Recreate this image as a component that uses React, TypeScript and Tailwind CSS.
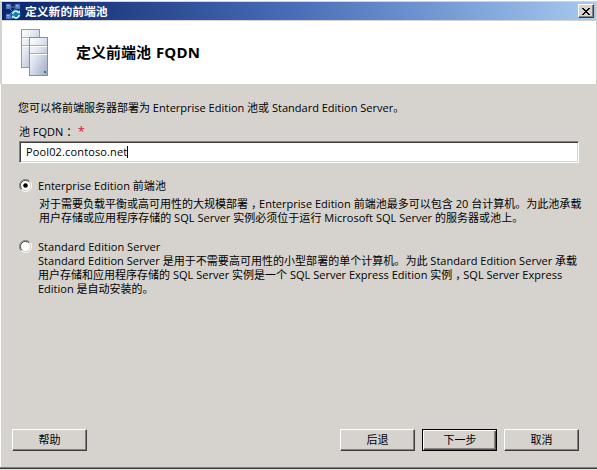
import React from "react";

const Line = ({ className = "", children }: { className?: string; children: React.ReactNode }) => (
  <div className={"h-[14px] whitespace-nowrap leading-[14px] " + className}>{children}</div>
);

const Comma = () => <span className="pr-[2.5px] pl-[3px] [font-feature-settings:'halt']">，</span>;

const ServerIcon = () => (
  <svg width="30" height="50" viewBox="0 0 30 50" className="shrink-0">
    <defs>
      <linearGradient id="face" x1="0" y1="0" x2="1" y2="1">
        <stop offset="0" stopColor="#ffffff" />
        <stop offset="0.4" stopColor="#e2e7f1" />
        <stop offset="1" stopColor="#9eaac4" />
      </linearGradient>
    </defs>
    <rect x="1.5" y="1.5" width="18" height="38" fill="url(#face)" stroke="#8f99ac" />
    <path d="M2 9.5H19M2 17.5H19" stroke="#aab2c2" />
    <path d="M2 10.5H19M2 18.5H19" stroke="#fff" />
    <rect x="9.5" y="9.5" width="18" height="38" fill="url(#face)" stroke="#858fa3" />
    <path d="M10 17.5H27M10 25.5H27" stroke="#a3acbf" />
    <path d="M10 18.5H27M10 26.5H27" stroke="#fff" />
    <rect x="24" y="43" width="2" height="2" fill="#28855f" />
  </svg>
);

const AppIcon = () => (
  <svg width="17" height="17" viewBox="0 0 17 17" className="shrink-0">
    <path d="M4 4L13 13M13 4L4 13M4 4H13" stroke="#5f82c4" strokeWidth="1" />
    <g fill="#6288cc" stroke="#2b4f99" strokeWidth=".6">
      <rect x="2" y="1" width="5" height="5" />
      <rect x="11" y="1" width="5" height="5" />
      <rect x="2" y="11" width="5" height="5" />
    </g>
    <path d="M3 2h2v1H3zM12 2h2v1h-2zM3 12h2v1H3z" fill="#9cb8e6" />
    <circle cx="12" cy="11.5" r="4.6" fill="#187aa9" />
    <path d="M8.6 11a3.4 3.4 0 0 1 5.6-2M15.2 12a3.4 3.4 0 0 1-5.6 2" fill="none" stroke="#c8f8fb" strokeWidth="1.6" />
    <path d="M12.6 10.2h3.4V7zM11.2 12.8H7.8V16z" fill="#b5f0f5" />
  </svg>
);

const Radio = ({ on = false }: { on?: boolean }) => (
  <svg width="13" height="13" viewBox="0 0 13 13" className="shrink-0">
    <circle cx="6.5" cy="6.5" r="5" fill="#fff" />
    <path d="M2.2 10.8A6 6 0 0 1 10.8 2.2" fill="none" stroke="#858180" />
    <path d="M2.9 10.1A5 5 0 0 1 10.1 2.9" fill="none" stroke="#504c4c" />
    <path d="M10.8 2.2A6 6 0 0 1 2.2 10.8" fill="none" stroke="#fff" />
    <path d="M10.1 2.9A5 5 0 0 1 2.9 10.1" fill="none" stroke="#d4d0c8" />
    {on && <circle cx="6.5" cy="6.5" r="2.3" fill="#000" />}
  </svg>
);

const Button = ({ label, primary = false }: { label: string; primary?: boolean }) => (
  <button
    className={
      "flex h-[22px] w-[75px] items-center justify-center border pt-px text-[11px] " +
      (primary
        ? "border-black pl-px shadow-[inset_1px_1px_0_#fff,inset_-1px_-1px_0_#55514f,inset_-2px_-2px_0_#8a8683]"
        : "border-t-white border-l-white border-r-[#403c3c] border-b-[#403c3c] shadow-[inset_-1px_-1px_0_#858180]")
    }
  >
    {label}
  </button>
);

export default function App() {
  return (
    <div className="flex h-[470px] w-[597px] flex-col border-t border-white bg-[#d6d3ce] pt-px font-['Open_Sans','Noto_Sans_CJK_SC',sans-serif] text-[11px] text-black">
      <div className="ml-[2px] flex h-[18px] w-[594px] shrink-0 items-center bg-linear-to-r from-[#0a246a] via-[#4a6fb8] to-[#a6caf0] pr-[2px] pl-[2px]">
        <AppIcon />
        <span className="ml-[4px] text-[11.8px] leading-[18px] font-bold whitespace-nowrap text-white">定义新的前端池</span>
        <button className="ml-auto flex h-[14px] w-[16px] items-center justify-center border border-t-white border-l-white border-r-[#403c3c] border-b-[#403c3c] bg-[#d6d3ce] shadow-[inset_-1px_-1px_0_#858180]">
          <svg width="8" height="7" viewBox="0 0 8 7" shapeRendering="crispEdges">
            <path d="M0 0h2v1h1v1h2V1h1V0h2v1H7v1H6v1H5v1h1v1h1v1h1v1H6V6H5V5H3v1H2v1H0V6h1V5h1V4h1V3H2V2H1V1H0z" />
          </svg>
        </button>
      </div>
      <div className="mt-px ml-[2px] flex h-[63px] w-[594px] shrink-0 items-start bg-white pt-[7px] pl-[18px]">
        <ServerIcon />
        <h1 className="mt-[14px] ml-[26px] text-[15px] leading-[20px] font-bold whitespace-nowrap">
          定义前端池 <span className="ml-[1px] tracking-[0.2px]">FQDN</span>
        </h1>
      </div>
      <div className="flex flex-1 flex-col border-l-[1px] border-white pl-[17px]">
        <Line className="mt-[17px]">您可以将前端服务器部署为 Enterprise Edition 池或 Standard Edition Server。</Line>
        <Line className="mt-[9px] ml-px">
          池 FQDN<span className="pr-[2px] pl-[3px] [font-feature-settings:'halt']">：</span>
          <span className="ml-[4px] text-[13px] text-[#d02030]">*</span>
        </Line>
        <div className="mt-[3px] ml-px flex h-[22px] w-[560px] shrink-0 items-center border border-t-[#858180] border-l-[#858180] border-r-white border-b-white bg-white pl-[6px] shadow-[inset_1px_1px_0_#403c3c,inset_-1px_-1px_0_#d6d3ce]">
          <span className="tracking-[0.14px]">Pool02.contoso.net</span>
          <span className="h-[12px] w-px bg-black" />
        </div>
        <div className="mt-[16px] ml-px flex">
          <Radio on />
          <div className="ml-[6px]">
            <Line className="tracking-[0.03px]">Enterprise Edition 前端池</Line>
            <Line className="mt-[4px] ml-px">
              对于需要负载平衡或高可用性的大规模部署<Comma />
              <span className="tracking-[0.02px]">Enterprise Edition 前端池最多可以包含 20 台计算机。为此池承载</span>
            </Line>
            <Line className="ml-px tracking-[0.02px]">用户存储或应用程序存储的 SQL Server 实例必须位于运行 Microsoft SQL Server 的服务器或池上。</Line>
          </div>
        </div>
        <div className="mt-[15px] ml-px flex">
          <Radio />
          <div className="ml-[6px]">
            <Line className="tracking-[0.05px]">Standard Edition Server</Line>
            <Line className="tracking-[0.03px]">Standard Edition Server 是用于不需要高可用性的小型部署的单个计算机。为此 Standard Edition Server 承载</Line>
            <Line className="tracking-[0.01px]">
              用户存储和应用程序存储的 SQL Server 实例是一个 SQL Server Express Edition 实例<Comma />SQL Server Express
            </Line>
            <Line>Edition 是自动安装的。</Line>
          </div>
        </div>
        <div className="mt-auto mb-[16px] ml-[-6px] flex">
          <Button label="帮助" />
          <div className="ml-[253px] flex gap-[7px]">
            <Button label="后退" />
            <Button label="下一步" primary />
            <Button label="取消" />
          </div>
        </div>
      </div>
      <div className="h-[2px] shrink-0 border-t border-[#858180] bg-[#403c3c]" />
      <div className="h-px shrink-0 bg-[#dfe4da]" />
    </div>
  );
}
